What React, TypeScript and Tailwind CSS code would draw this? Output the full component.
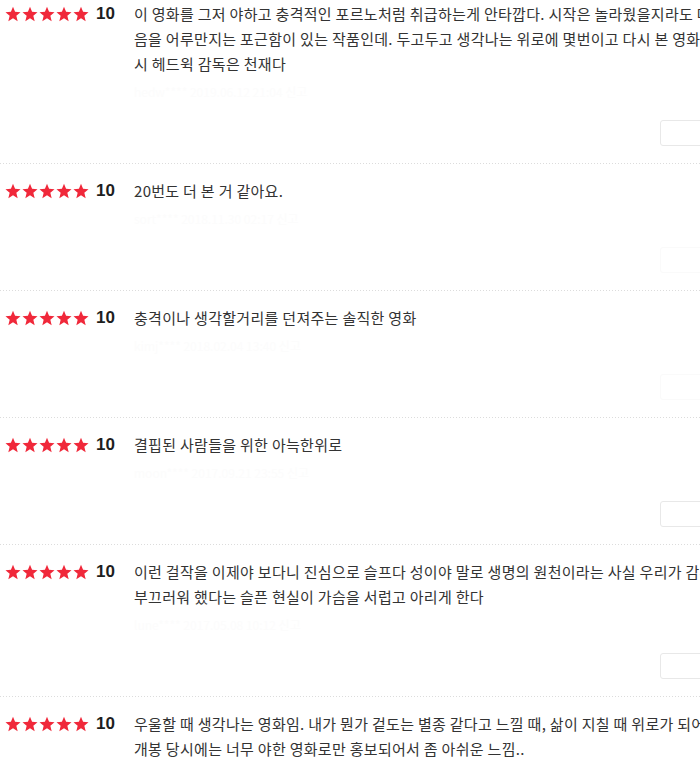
import React from "react";

type Review = {
  lines: string[];
  meta: string;
  faint?: boolean;
};

const reviews: Review[] = [
  {
    lines: [
      "이 영화를 그저 야하고 충격적인 포르노처럼 취급하는게 안타깝다. 시작은 놀라웠을지라도 마",
      "음을 어루만지는 포근함이 있는 작품인데. 두고두고 생각나는 위로에 몇번이고 다시 본 영화. 역",
      "시 헤드윅 감독은 천재다",
    ],
    meta: "hedw****   2019.06.12 21:04   신고",
  },
  {
    lines: ["20번도 더 본 거 같아요."],
    meta: "sort****   2018.11.30 02:17   신고",
    faint: true,
  },
  {
    lines: ["충격이나 생각할거리를 던져주는 솔직한 영화"],
    meta: "kimj****   2018.02.04 13:40   신고",
    faint: true,
  },
  {
    lines: ["결핍된 사람들을 위한 아늑한위로"],
    meta: "moon****   2017.09.21 23:55   신고",
  },
  {
    lines: [
      "이런 걸작을 이제야 보다니 진심으로 슬프다 성이야 말로 생명의 원천이라는 사실 우리가 감추고",
      "부끄러워 했다는 슬픈 현실이 가슴을 서럽고 아리게 한다",
    ],
    meta: "lune****   2017.05.08 10:12   신고",
  },
  {
    lines: [
      "우울할 때 생각나는 영화임. 내가 뭔가 겉도는 별종 같다고 느낄 때, 삶이 지칠 때 위로가 되어준다",
      "개봉 당시에는 너무 야한 영화로만 홍보되어서 좀 아쉬운 느낌..",
    ],
    meta: "shor****   2016.12.24 01:33   신고",
  },
];

function Star() {
  return (
    <svg viewBox="0 0 24 24" className="h-4 w-4 shrink-0" aria-hidden="true">
      <path
        d="M12 1.2l3.1 7.6 8.2.6-6.3 5.3 2 8L12 18.4l-7 4.3 2-8L.7 9.4l8.2-.6z"
        fill="#f0283a"
      />
    </svg>
  );
}

function ReviewRow({ review }: { review: Review }) {
  return (
    <li className="flex pt-[14px] pb-[17px]">
      <div className="flex h-[25px] w-[134px] shrink-0 items-center pl-[5px]">
        <div className="flex gap-px">
          <Star />
          <Star />
          <Star />
          <Star />
          <Star />
        </div>
        <span className="ml-[7px] text-[17px] font-bold leading-none text-[#1e1e1e] [font-family:'Liberation_Sans',Arial,sans-serif]">
          10
        </span>
      </div>
      <div className="min-w-0 flex-1">
        <p className="text-[15px] leading-[25px] tracking-[0.3px] text-[#333] [font-family:'Noto_Sans_CJK_KR','Noto_Sans',sans-serif]">
          {review.lines.map((line, i) => (
            <span key={i} className="block whitespace-nowrap">
              {line}
            </span>
          ))}
        </p>
        <p className="mt-[6px] h-[20px] whitespace-nowrap text-[12px] leading-[20px] text-[#fcfcfc] [font-family:'Noto_Sans_CJK_KR',sans-serif]">
          {review.meta}
        </p>
        <div className="mt-[18px] flex justify-end">
          <div
            className={
              review.faint
                ? "mr-[-40px] h-[26px] w-[80px] rounded-[3px] border border-[#fafafa]"
                : "mr-[-40px] h-[26px] w-[80px] rounded-[3px] border border-[#e8e8e8]"
            }
          />
        </div>
      </div>
    </li>
  );
}

export default function App() {
  return (
    <div className="h-[762px] w-[700px] overflow-hidden bg-white">
      <ul className="-mt-[13px] w-[700px]">
        {reviews.map((r, i) => (
          <React.Fragment key={i}>
            {i > 0 && (
              <li
                aria-hidden="true"
                className="h-px w-full bg-[linear-gradient(to_right,#dcdcdc_1px,transparent_1px)] bg-[length:3px_1px]"
              />
            )}
            <ReviewRow review={r} />
          </React.Fragment>
        ))}
      </ul>
    </div>
  );
}
